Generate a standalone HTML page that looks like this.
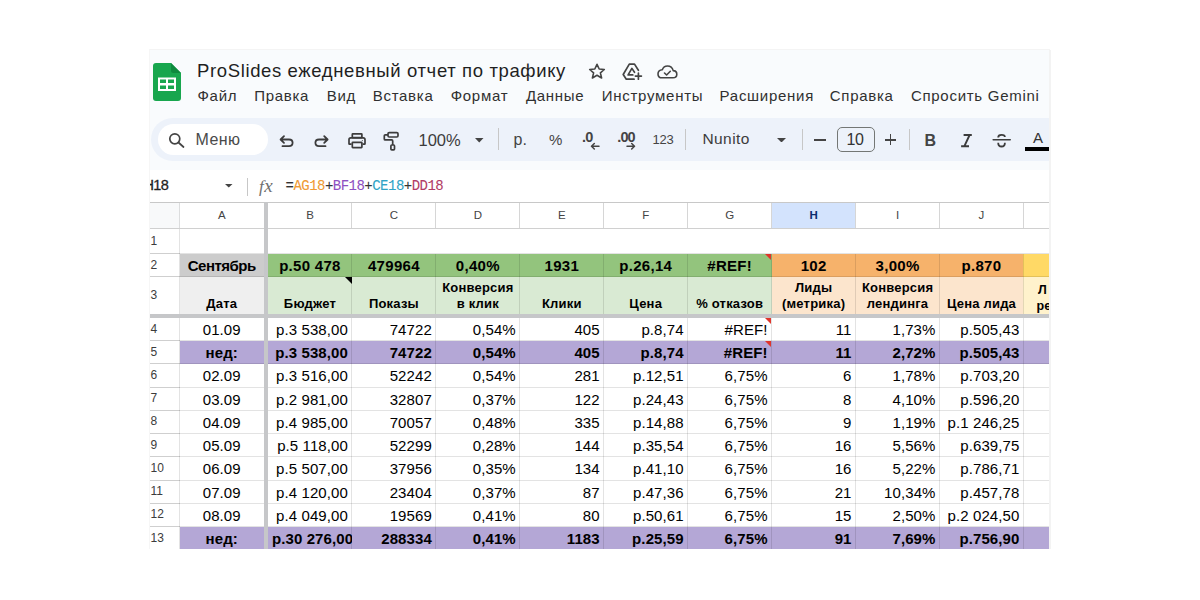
<!DOCTYPE html><html><head><meta charset="utf-8"><style>
*{margin:0;padding:0;box-sizing:border-box}
html,body{width:1200px;height:600px;background:#fff;overflow:hidden;font-family:"Liberation Sans",sans-serif}
#p{position:absolute;left:150px;top:50px;width:899px;height:499px;background:#f9fbfd;overflow:hidden}
#sh{position:absolute;left:1049px;top:50px;width:2px;height:499px;background:#f3f3f3}
#st{position:absolute;left:149px;top:49px;width:901px;height:1px;background:#f4f4f4}
#sl{position:absolute;left:149px;top:49px;width:1px;height:500px;background:#f6f6f6}
.a{position:absolute;white-space:nowrap}
.c{position:absolute;white-space:nowrap;overflow:hidden;color:#000}
.hl{position:absolute;background:#e1e1e1}
</style></head><body>
<div id="sh"></div><div id="st"></div><div id="sl"></div><div id="p">
<div class="a" style="left:0.00px;top:120.00px;width:900.00px;height:379.00px;background:#fff"></div>
<div class="a" style="left:0.00px;top:152.00px;width:900.00px;height:26.50px;background:#fff"></div>
<div class="a" style="left:0.00px;top:152.00px;width:29.50px;height:26.50px;background:#f8f9fa"></div>
<div class="a" style="left:621.50px;top:152.00px;width:84.00px;height:26.50px;background:#d3e3fd"></div>
<div class="a" style="left:29.50px;top:203.50px;width:84.50px;height:23.00px;background:#cccccc"></div>
<div class="a" style="left:29.50px;top:226.50px;width:84.50px;height:37.00px;background:#efefef"></div>
<div class="a" style="left:118.00px;top:203.50px;width:83.94px;height:23.00px;background:#93c47d"></div>
<div class="a" style="left:118.00px;top:226.50px;width:83.94px;height:37.00px;background:#d9ead3"></div>
<div class="a" style="left:201.94px;top:203.50px;width:83.94px;height:23.00px;background:#93c47d"></div>
<div class="a" style="left:201.94px;top:226.50px;width:83.94px;height:37.00px;background:#d9ead3"></div>
<div class="a" style="left:285.88px;top:203.50px;width:83.94px;height:23.00px;background:#93c47d"></div>
<div class="a" style="left:285.88px;top:226.50px;width:83.94px;height:37.00px;background:#d9ead3"></div>
<div class="a" style="left:369.82px;top:203.50px;width:83.94px;height:23.00px;background:#93c47d"></div>
<div class="a" style="left:369.82px;top:226.50px;width:83.94px;height:37.00px;background:#d9ead3"></div>
<div class="a" style="left:453.76px;top:203.50px;width:83.94px;height:23.00px;background:#93c47d"></div>
<div class="a" style="left:453.76px;top:226.50px;width:83.94px;height:37.00px;background:#d9ead3"></div>
<div class="a" style="left:537.70px;top:203.50px;width:83.94px;height:23.00px;background:#93c47d"></div>
<div class="a" style="left:537.70px;top:226.50px;width:83.94px;height:37.00px;background:#d9ead3"></div>
<div class="a" style="left:621.64px;top:203.50px;width:83.94px;height:23.00px;background:#f6b26b"></div>
<div class="a" style="left:621.64px;top:226.50px;width:83.94px;height:37.00px;background:#fce5cd"></div>
<div class="a" style="left:705.58px;top:203.50px;width:83.94px;height:23.00px;background:#f6b26b"></div>
<div class="a" style="left:705.58px;top:226.50px;width:83.94px;height:37.00px;background:#fce5cd"></div>
<div class="a" style="left:789.52px;top:203.50px;width:83.94px;height:23.00px;background:#f6b26b"></div>
<div class="a" style="left:789.52px;top:226.50px;width:83.94px;height:37.00px;background:#fce5cd"></div>
<div class="a" style="left:873.46px;top:203.50px;width:83.94px;height:23.00px;background:#ffd966"></div>
<div class="a" style="left:873.46px;top:226.50px;width:83.94px;height:37.00px;background:#fff2cc"></div>
<div class="a" style="left:29.50px;top:290.50px;width:870.50px;height:23.25px;background:#b4a7d6"></div>
<div class="a" style="left:29.50px;top:476.50px;width:870.50px;height:22.50px;background:#b4a7d6"></div>
<div class="a" style="left:0.00px;top:178.00px;width:900.00px;height:1.00px;background:rgba(0,0,0,0.11)"></div>
<div class="a" style="left:0.00px;top:178.00px;width:29.50px;height:1.00px;background:#cfcfcf"></div>
<div class="a" style="left:0.00px;top:203.00px;width:900.00px;height:1.00px;background:rgba(0,0,0,0.11)"></div>
<div class="a" style="left:0.00px;top:203.00px;width:29.50px;height:1.00px;background:#cfcfcf"></div>
<div class="a" style="left:0.00px;top:226.00px;width:900.00px;height:1.00px;background:rgba(0,0,0,0.11)"></div>
<div class="a" style="left:0.00px;top:226.00px;width:29.50px;height:1.00px;background:#cfcfcf"></div>
<div class="a" style="left:0.00px;top:290.00px;width:900.00px;height:1.00px;background:rgba(0,0,0,0.11)"></div>
<div class="a" style="left:0.00px;top:290.00px;width:29.50px;height:1.00px;background:#cfcfcf"></div>
<div class="a" style="left:0.00px;top:313.25px;width:900.00px;height:1.00px;background:rgba(0,0,0,0.11)"></div>
<div class="a" style="left:0.00px;top:313.25px;width:29.50px;height:1.00px;background:#cfcfcf"></div>
<div class="a" style="left:0.00px;top:336.50px;width:900.00px;height:1.00px;background:rgba(0,0,0,0.11)"></div>
<div class="a" style="left:0.00px;top:336.50px;width:29.50px;height:1.00px;background:#cfcfcf"></div>
<div class="a" style="left:0.00px;top:359.75px;width:900.00px;height:1.00px;background:rgba(0,0,0,0.11)"></div>
<div class="a" style="left:0.00px;top:359.75px;width:29.50px;height:1.00px;background:#cfcfcf"></div>
<div class="a" style="left:0.00px;top:383.00px;width:900.00px;height:1.00px;background:rgba(0,0,0,0.11)"></div>
<div class="a" style="left:0.00px;top:383.00px;width:29.50px;height:1.00px;background:#cfcfcf"></div>
<div class="a" style="left:0.00px;top:406.25px;width:900.00px;height:1.00px;background:rgba(0,0,0,0.11)"></div>
<div class="a" style="left:0.00px;top:406.25px;width:29.50px;height:1.00px;background:#cfcfcf"></div>
<div class="a" style="left:0.00px;top:429.50px;width:900.00px;height:1.00px;background:rgba(0,0,0,0.11)"></div>
<div class="a" style="left:0.00px;top:429.50px;width:29.50px;height:1.00px;background:#cfcfcf"></div>
<div class="a" style="left:0.00px;top:452.75px;width:900.00px;height:1.00px;background:rgba(0,0,0,0.11)"></div>
<div class="a" style="left:0.00px;top:452.75px;width:29.50px;height:1.00px;background:#cfcfcf"></div>
<div class="a" style="left:0.00px;top:476.00px;width:900.00px;height:1.00px;background:rgba(0,0,0,0.11)"></div>
<div class="a" style="left:0.00px;top:476.00px;width:29.50px;height:1.00px;background:#cfcfcf"></div>
<div class="a" style="left:0.00px;top:498.50px;width:900.00px;height:1.00px;background:rgba(0,0,0,0.11)"></div>
<div class="a" style="left:0.00px;top:498.50px;width:29.50px;height:1.00px;background:#cfcfcf"></div>
<div class="a" style="left:29.00px;top:152.00px;width:1.00px;height:347.00px;background:rgba(0,0,0,0.11)"></div>
<div class="a" style="left:201.44px;top:152.00px;width:1.00px;height:26.50px;background:#d6d6d6"></div>
<div class="a" style="left:201.44px;top:203.50px;width:1.00px;height:295.50px;background:rgba(0,0,0,0.11)"></div>
<div class="a" style="left:285.38px;top:152.00px;width:1.00px;height:26.50px;background:#d6d6d6"></div>
<div class="a" style="left:285.38px;top:203.50px;width:1.00px;height:295.50px;background:rgba(0,0,0,0.11)"></div>
<div class="a" style="left:369.32px;top:152.00px;width:1.00px;height:26.50px;background:#d6d6d6"></div>
<div class="a" style="left:369.32px;top:203.50px;width:1.00px;height:295.50px;background:rgba(0,0,0,0.11)"></div>
<div class="a" style="left:453.26px;top:152.00px;width:1.00px;height:26.50px;background:#d6d6d6"></div>
<div class="a" style="left:453.26px;top:203.50px;width:1.00px;height:295.50px;background:rgba(0,0,0,0.11)"></div>
<div class="a" style="left:537.20px;top:152.00px;width:1.00px;height:26.50px;background:#d6d6d6"></div>
<div class="a" style="left:537.20px;top:203.50px;width:1.00px;height:295.50px;background:rgba(0,0,0,0.11)"></div>
<div class="a" style="left:621.14px;top:152.00px;width:1.00px;height:26.50px;background:#d6d6d6"></div>
<div class="a" style="left:621.14px;top:203.50px;width:1.00px;height:295.50px;background:rgba(0,0,0,0.11)"></div>
<div class="a" style="left:705.08px;top:152.00px;width:1.00px;height:26.50px;background:#d6d6d6"></div>
<div class="a" style="left:705.08px;top:203.50px;width:1.00px;height:295.50px;background:rgba(0,0,0,0.11)"></div>
<div class="a" style="left:789.02px;top:152.00px;width:1.00px;height:26.50px;background:#d6d6d6"></div>
<div class="a" style="left:789.02px;top:203.50px;width:1.00px;height:295.50px;background:rgba(0,0,0,0.11)"></div>
<div class="a" style="left:872.96px;top:152.00px;width:1.00px;height:26.50px;background:#d6d6d6"></div>
<div class="a" style="left:872.96px;top:203.50px;width:1.00px;height:295.50px;background:rgba(0,0,0,0.11)"></div>
<div class="a" style="left:0.00px;top:151.50px;width:900.00px;height:1.00px;background:#c8c8c8"></div>
<div class="a" style="left:0.00px;top:178.00px;width:900.00px;height:1.00px;background:#d0d0d0"></div>
<div class="a" style="left:114.00px;top:152.00px;width:4.00px;height:347.00px;background:#c6c7c9"></div>
<div class="a" style="left:0.00px;top:263.50px;width:900.00px;height:4.00px;background:#c6c7c9"></div>
<div class="c" style="left:29.50px;top:152.00px;width:84.50px;height:26.50px;font-size:11.5px;color:#444;text-align:center;line-height:26px">A</div>
<div class="c" style="left:118.00px;top:152.00px;width:83.94px;height:26.50px;font-size:11.5px;color:#444;text-align:center;line-height:26px">B</div>
<div class="c" style="left:201.94px;top:152.00px;width:83.94px;height:26.50px;font-size:11.5px;color:#444;text-align:center;line-height:26px">C</div>
<div class="c" style="left:285.88px;top:152.00px;width:83.94px;height:26.50px;font-size:11.5px;color:#444;text-align:center;line-height:26px">D</div>
<div class="c" style="left:369.82px;top:152.00px;width:83.94px;height:26.50px;font-size:11.5px;color:#444;text-align:center;line-height:26px">E</div>
<div class="c" style="left:453.76px;top:152.00px;width:83.94px;height:26.50px;font-size:11.5px;color:#444;text-align:center;line-height:26px">F</div>
<div class="c" style="left:537.70px;top:152.00px;width:83.94px;height:26.50px;font-size:11.5px;color:#444;text-align:center;line-height:26px">G</div>
<div class="c" style="left:621.64px;top:152.00px;width:83.94px;height:26.50px;font-size:11.5px;color:#0b2e6f;font-weight:bold;text-align:center;line-height:26px">H</div>
<div class="c" style="left:705.58px;top:152.00px;width:83.94px;height:26.50px;font-size:11.5px;color:#444;text-align:center;line-height:26px">I</div>
<div class="c" style="left:789.52px;top:152.00px;width:83.94px;height:26.50px;font-size:11.5px;color:#444;text-align:center;line-height:26px">J</div>
<div class="c" style="left:873.46px;top:152.00px;width:83.94px;height:26.50px;font-size:11.5px;color:#444;text-align:center;line-height:26px">K</div>
<div class="c" style="left:0.00px;top:178.50px;width:29.50px;height:25.00px;font-size:12px;color:#3c3c3c;line-height:25.00px;text-indent:0.5px">1</div>
<div class="c" style="left:0.00px;top:203.50px;width:29.50px;height:23.00px;font-size:12px;color:#3c3c3c;line-height:23.00px;text-indent:0.5px">2</div>
<div class="c" style="left:0.00px;top:226.50px;width:29.50px;height:37.00px;font-size:12px;color:#3c3c3c;line-height:37.00px;text-indent:0.5px">3</div>
<div class="c" style="left:0.00px;top:267.50px;width:29.50px;height:23.00px;font-size:12px;color:#3c3c3c;line-height:23.00px;text-indent:0.5px">4</div>
<div class="c" style="left:0.00px;top:290.50px;width:29.50px;height:23.25px;font-size:12px;color:#3c3c3c;line-height:23.25px;text-indent:0.5px">5</div>
<div class="c" style="left:0.00px;top:313.75px;width:29.50px;height:23.25px;font-size:12px;color:#3c3c3c;line-height:23.25px;text-indent:0.5px">6</div>
<div class="c" style="left:0.00px;top:337.00px;width:29.50px;height:23.25px;font-size:12px;color:#3c3c3c;line-height:23.25px;text-indent:0.5px">7</div>
<div class="c" style="left:0.00px;top:360.25px;width:29.50px;height:23.25px;font-size:12px;color:#3c3c3c;line-height:23.25px;text-indent:0.5px">8</div>
<div class="c" style="left:0.00px;top:383.50px;width:29.50px;height:23.25px;font-size:12px;color:#3c3c3c;line-height:23.25px;text-indent:0.5px">9</div>
<div class="c" style="left:0.00px;top:406.75px;width:29.50px;height:23.25px;font-size:12px;color:#3c3c3c;line-height:23.25px;text-indent:0.5px">10</div>
<div class="c" style="left:0.00px;top:430.00px;width:29.50px;height:23.25px;font-size:12px;color:#3c3c3c;line-height:23.25px;text-indent:0.5px">11</div>
<div class="c" style="left:0.00px;top:453.25px;width:29.50px;height:23.25px;font-size:12px;color:#3c3c3c;line-height:23.25px;text-indent:0.5px">12</div>
<div class="c" style="left:0.00px;top:476.50px;width:29.50px;height:22.50px;font-size:12px;color:#3c3c3c;line-height:22.50px;text-indent:0.5px">13</div>
<div class="c" style="left:29.50px;top:203.50px;width:84.50px;height:23.00px;font-size:15px;font-weight:bold;text-align:center;line-height:23.00px;letter-spacing:-0.5px">Сентябрь</div>
<div class="c" style="left:118.00px;top:203.50px;width:83.94px;height:23.00px;font-size:15px;font-weight:bold;text-align:center;line-height:23.00px;letter-spacing:0.3px">р.50 478</div>
<div class="c" style="left:201.94px;top:203.50px;width:83.94px;height:23.00px;font-size:15px;font-weight:bold;text-align:center;line-height:23.00px;letter-spacing:0.3px">479964</div>
<div class="c" style="left:285.88px;top:203.50px;width:83.94px;height:23.00px;font-size:15px;font-weight:bold;text-align:center;line-height:23.00px;letter-spacing:0.3px">0,40%</div>
<div class="c" style="left:369.82px;top:203.50px;width:83.94px;height:23.00px;font-size:15px;font-weight:bold;text-align:center;line-height:23.00px;letter-spacing:0.3px">1931</div>
<div class="c" style="left:453.76px;top:203.50px;width:83.94px;height:23.00px;font-size:15px;font-weight:bold;text-align:center;line-height:23.00px;letter-spacing:0.3px">р.26,14</div>
<div class="c" style="left:537.70px;top:203.50px;width:83.94px;height:23.00px;font-size:15px;font-weight:bold;text-align:center;line-height:23.00px;letter-spacing:0.3px">#REF!</div>
<div class="c" style="left:621.64px;top:203.50px;width:83.94px;height:23.00px;font-size:15px;font-weight:bold;text-align:center;line-height:23.00px;letter-spacing:0.3px">102</div>
<div class="c" style="left:705.58px;top:203.50px;width:83.94px;height:23.00px;font-size:15px;font-weight:bold;text-align:center;line-height:23.00px;letter-spacing:0.3px">3,00%</div>
<div class="c" style="left:789.52px;top:203.50px;width:83.94px;height:23.00px;font-size:15px;font-weight:bold;text-align:center;line-height:23.00px;letter-spacing:0.3px">р.870</div>
<div class="c" style="left:873.46px;top:203.50px;width:83.94px;height:23.00px;font-size:15px;font-weight:bold;text-align:center;line-height:23.00px;letter-spacing:0.3px"></div>
<div class="c" style="left:29.50px;top:226.50px;width:84.50px;height:37.00px;font-size:13px;font-weight:bold;text-align:center;line-height:16px;display:flex;align-items:flex-end;justify-content:center;padding-bottom:1.2px;letter-spacing:0.2px"><span>Дата</span></div>
<div class="c" style="left:118.00px;top:226.50px;width:83.94px;height:37.00px;font-size:13px;font-weight:bold;text-align:center;line-height:16px;display:flex;align-items:flex-end;justify-content:center;padding-bottom:1.2px;letter-spacing:0.2px"><span>Бюджет</span></div>
<div class="c" style="left:201.94px;top:226.50px;width:83.94px;height:37.00px;font-size:13px;font-weight:bold;text-align:center;line-height:16px;display:flex;align-items:flex-end;justify-content:center;padding-bottom:1.2px;letter-spacing:0.2px"><span>Показы</span></div>
<div class="c" style="left:285.88px;top:226.50px;width:83.94px;height:37.00px;font-size:13px;font-weight:bold;text-align:center;line-height:16px;display:flex;align-items:flex-end;justify-content:center;padding-bottom:1.2px;letter-spacing:0.2px"><span>Конверсия<br>в клик</span></div>
<div class="c" style="left:369.82px;top:226.50px;width:83.94px;height:37.00px;font-size:13px;font-weight:bold;text-align:center;line-height:16px;display:flex;align-items:flex-end;justify-content:center;padding-bottom:1.2px;letter-spacing:0.2px"><span>Клики</span></div>
<div class="c" style="left:453.76px;top:226.50px;width:83.94px;height:37.00px;font-size:13px;font-weight:bold;text-align:center;line-height:16px;display:flex;align-items:flex-end;justify-content:center;padding-bottom:1.2px;letter-spacing:0.2px"><span>Цена</span></div>
<div class="c" style="left:537.70px;top:226.50px;width:83.94px;height:37.00px;font-size:13px;font-weight:bold;text-align:center;line-height:16px;display:flex;align-items:flex-end;justify-content:center;padding-bottom:1.2px;letter-spacing:0.2px"><span>% отказов</span></div>
<div class="c" style="left:621.64px;top:226.50px;width:83.94px;height:37.00px;font-size:13px;font-weight:bold;text-align:center;line-height:16px;display:flex;align-items:flex-end;justify-content:center;padding-bottom:1.2px;letter-spacing:0.2px"><span>Лиды<br>(метрика)</span></div>
<div class="c" style="left:705.58px;top:226.50px;width:83.94px;height:37.00px;font-size:13px;font-weight:bold;text-align:center;line-height:16px;display:flex;align-items:flex-end;justify-content:center;padding-bottom:1.2px;letter-spacing:0.2px"><span>Конверсия<br>лендинга</span></div>
<div class="c" style="left:789.52px;top:226.50px;width:83.94px;height:37.00px;font-size:13px;font-weight:bold;text-align:center;line-height:16px;display:flex;align-items:flex-end;justify-content:center;padding-bottom:1.2px;letter-spacing:0.2px"><span>Цена лида</span></div>
<div class="c" style="left:873.46px;top:226.50px;width:83.94px;height:37.00px;font-size:13px;font-weight:bold;text-align:center;line-height:16px;display:flex;align-items:flex-end;justify-content:center;padding-bottom:1.2px;letter-spacing:0.2px"><span></span></div>
<div class="c" style="left:29.50px;top:267.50px;width:84.50px;height:23.00px;font-size:15px;font-weight:normal;text-align:center;line-height:23.00px;padding:0.57px 4px 0 4px;line-height:23.25px;letter-spacing:0.1px">01.09</div>
<div class="c" style="left:118.00px;top:267.50px;width:83.94px;height:23.00px;font-size:15px;font-weight:normal;text-align:right;line-height:23.00px;padding:0.57px 4px 0 4px;line-height:23.25px;letter-spacing:0.1px">р.3 538,00</div>
<div class="c" style="left:201.94px;top:267.50px;width:83.94px;height:23.00px;font-size:15px;font-weight:normal;text-align:right;line-height:23.00px;padding:0.57px 4px 0 4px;line-height:23.25px;letter-spacing:0.1px">74722</div>
<div class="c" style="left:285.88px;top:267.50px;width:83.94px;height:23.00px;font-size:15px;font-weight:normal;text-align:right;line-height:23.00px;padding:0.57px 4px 0 4px;line-height:23.25px;letter-spacing:0.1px">0,54%</div>
<div class="c" style="left:369.82px;top:267.50px;width:83.94px;height:23.00px;font-size:15px;font-weight:normal;text-align:right;line-height:23.00px;padding:0.57px 4px 0 4px;line-height:23.25px;letter-spacing:0.1px">405</div>
<div class="c" style="left:453.76px;top:267.50px;width:83.94px;height:23.00px;font-size:15px;font-weight:normal;text-align:right;line-height:23.00px;padding:0.57px 4px 0 4px;line-height:23.25px;letter-spacing:0.1px">р.8,74</div>
<div class="c" style="left:537.70px;top:267.50px;width:83.94px;height:23.00px;font-size:15px;font-weight:normal;text-align:right;line-height:23.00px;padding:0.57px 4px 0 4px;line-height:23.25px;letter-spacing:0.1px">#REF!</div>
<div class="c" style="left:621.64px;top:267.50px;width:83.94px;height:23.00px;font-size:15px;font-weight:normal;text-align:right;line-height:23.00px;padding:0.57px 4px 0 4px;line-height:23.25px;letter-spacing:0.1px">11</div>
<div class="c" style="left:705.58px;top:267.50px;width:83.94px;height:23.00px;font-size:15px;font-weight:normal;text-align:right;line-height:23.00px;padding:0.57px 4px 0 4px;line-height:23.25px;letter-spacing:0.1px">1,73%</div>
<div class="c" style="left:789.52px;top:267.50px;width:83.94px;height:23.00px;font-size:15px;font-weight:normal;text-align:right;line-height:23.00px;padding:0.57px 4px 0 4px;line-height:23.25px;letter-spacing:0.1px">р.505,43</div>
<div class="c" style="left:29.50px;top:290.50px;width:84.50px;height:23.25px;font-size:15px;font-weight:bold;text-align:center;line-height:23.25px;padding:0.70px 4px 0 4px;line-height:23.25px;letter-spacing:0.1px">нед:</div>
<div class="c" style="left:118.00px;top:290.50px;width:83.94px;height:23.25px;font-size:15px;font-weight:bold;text-align:right;line-height:23.25px;padding:0.70px 4px 0 4px;line-height:23.25px;letter-spacing:0.1px">р.3 538,00</div>
<div class="c" style="left:201.94px;top:290.50px;width:83.94px;height:23.25px;font-size:15px;font-weight:bold;text-align:right;line-height:23.25px;padding:0.70px 4px 0 4px;line-height:23.25px;letter-spacing:0.1px">74722</div>
<div class="c" style="left:285.88px;top:290.50px;width:83.94px;height:23.25px;font-size:15px;font-weight:bold;text-align:right;line-height:23.25px;padding:0.70px 4px 0 4px;line-height:23.25px;letter-spacing:0.1px">0,54%</div>
<div class="c" style="left:369.82px;top:290.50px;width:83.94px;height:23.25px;font-size:15px;font-weight:bold;text-align:right;line-height:23.25px;padding:0.70px 4px 0 4px;line-height:23.25px;letter-spacing:0.1px">405</div>
<div class="c" style="left:453.76px;top:290.50px;width:83.94px;height:23.25px;font-size:15px;font-weight:bold;text-align:right;line-height:23.25px;padding:0.70px 4px 0 4px;line-height:23.25px;letter-spacing:0.1px">р.8,74</div>
<div class="c" style="left:537.70px;top:290.50px;width:83.94px;height:23.25px;font-size:15px;font-weight:bold;text-align:right;line-height:23.25px;padding:0.70px 4px 0 4px;line-height:23.25px;letter-spacing:0.1px">#REF!</div>
<div class="c" style="left:621.64px;top:290.50px;width:83.94px;height:23.25px;font-size:15px;font-weight:bold;text-align:right;line-height:23.25px;padding:0.70px 4px 0 4px;line-height:23.25px;letter-spacing:0.1px">11</div>
<div class="c" style="left:705.58px;top:290.50px;width:83.94px;height:23.25px;font-size:15px;font-weight:bold;text-align:right;line-height:23.25px;padding:0.70px 4px 0 4px;line-height:23.25px;letter-spacing:0.1px">2,72%</div>
<div class="c" style="left:789.52px;top:290.50px;width:83.94px;height:23.25px;font-size:15px;font-weight:bold;text-align:right;line-height:23.25px;padding:0.70px 4px 0 4px;line-height:23.25px;letter-spacing:0.1px">р.505,43</div>
<div class="c" style="left:29.50px;top:313.75px;width:84.50px;height:23.25px;font-size:15px;font-weight:normal;text-align:center;line-height:23.25px;padding:0.70px 4px 0 4px;line-height:23.25px;letter-spacing:0.1px">02.09</div>
<div class="c" style="left:118.00px;top:313.75px;width:83.94px;height:23.25px;font-size:15px;font-weight:normal;text-align:right;line-height:23.25px;padding:0.70px 4px 0 4px;line-height:23.25px;letter-spacing:0.1px">р.3 516,00</div>
<div class="c" style="left:201.94px;top:313.75px;width:83.94px;height:23.25px;font-size:15px;font-weight:normal;text-align:right;line-height:23.25px;padding:0.70px 4px 0 4px;line-height:23.25px;letter-spacing:0.1px">52242</div>
<div class="c" style="left:285.88px;top:313.75px;width:83.94px;height:23.25px;font-size:15px;font-weight:normal;text-align:right;line-height:23.25px;padding:0.70px 4px 0 4px;line-height:23.25px;letter-spacing:0.1px">0,54%</div>
<div class="c" style="left:369.82px;top:313.75px;width:83.94px;height:23.25px;font-size:15px;font-weight:normal;text-align:right;line-height:23.25px;padding:0.70px 4px 0 4px;line-height:23.25px;letter-spacing:0.1px">281</div>
<div class="c" style="left:453.76px;top:313.75px;width:83.94px;height:23.25px;font-size:15px;font-weight:normal;text-align:right;line-height:23.25px;padding:0.70px 4px 0 4px;line-height:23.25px;letter-spacing:0.1px">р.12,51</div>
<div class="c" style="left:537.70px;top:313.75px;width:83.94px;height:23.25px;font-size:15px;font-weight:normal;text-align:right;line-height:23.25px;padding:0.70px 4px 0 4px;line-height:23.25px;letter-spacing:0.1px">6,75%</div>
<div class="c" style="left:621.64px;top:313.75px;width:83.94px;height:23.25px;font-size:15px;font-weight:normal;text-align:right;line-height:23.25px;padding:0.70px 4px 0 4px;line-height:23.25px;letter-spacing:0.1px">6</div>
<div class="c" style="left:705.58px;top:313.75px;width:83.94px;height:23.25px;font-size:15px;font-weight:normal;text-align:right;line-height:23.25px;padding:0.70px 4px 0 4px;line-height:23.25px;letter-spacing:0.1px">1,78%</div>
<div class="c" style="left:789.52px;top:313.75px;width:83.94px;height:23.25px;font-size:15px;font-weight:normal;text-align:right;line-height:23.25px;padding:0.70px 4px 0 4px;line-height:23.25px;letter-spacing:0.1px">р.703,20</div>
<div class="c" style="left:29.50px;top:337.00px;width:84.50px;height:23.25px;font-size:15px;font-weight:normal;text-align:center;line-height:23.25px;padding:0.70px 4px 0 4px;line-height:23.25px;letter-spacing:0.1px">03.09</div>
<div class="c" style="left:118.00px;top:337.00px;width:83.94px;height:23.25px;font-size:15px;font-weight:normal;text-align:right;line-height:23.25px;padding:0.70px 4px 0 4px;line-height:23.25px;letter-spacing:0.1px">р.2 981,00</div>
<div class="c" style="left:201.94px;top:337.00px;width:83.94px;height:23.25px;font-size:15px;font-weight:normal;text-align:right;line-height:23.25px;padding:0.70px 4px 0 4px;line-height:23.25px;letter-spacing:0.1px">32807</div>
<div class="c" style="left:285.88px;top:337.00px;width:83.94px;height:23.25px;font-size:15px;font-weight:normal;text-align:right;line-height:23.25px;padding:0.70px 4px 0 4px;line-height:23.25px;letter-spacing:0.1px">0,37%</div>
<div class="c" style="left:369.82px;top:337.00px;width:83.94px;height:23.25px;font-size:15px;font-weight:normal;text-align:right;line-height:23.25px;padding:0.70px 4px 0 4px;line-height:23.25px;letter-spacing:0.1px">122</div>
<div class="c" style="left:453.76px;top:337.00px;width:83.94px;height:23.25px;font-size:15px;font-weight:normal;text-align:right;line-height:23.25px;padding:0.70px 4px 0 4px;line-height:23.25px;letter-spacing:0.1px">р.24,43</div>
<div class="c" style="left:537.70px;top:337.00px;width:83.94px;height:23.25px;font-size:15px;font-weight:normal;text-align:right;line-height:23.25px;padding:0.70px 4px 0 4px;line-height:23.25px;letter-spacing:0.1px">6,75%</div>
<div class="c" style="left:621.64px;top:337.00px;width:83.94px;height:23.25px;font-size:15px;font-weight:normal;text-align:right;line-height:23.25px;padding:0.70px 4px 0 4px;line-height:23.25px;letter-spacing:0.1px">8</div>
<div class="c" style="left:705.58px;top:337.00px;width:83.94px;height:23.25px;font-size:15px;font-weight:normal;text-align:right;line-height:23.25px;padding:0.70px 4px 0 4px;line-height:23.25px;letter-spacing:0.1px">4,10%</div>
<div class="c" style="left:789.52px;top:337.00px;width:83.94px;height:23.25px;font-size:15px;font-weight:normal;text-align:right;line-height:23.25px;padding:0.70px 4px 0 4px;line-height:23.25px;letter-spacing:0.1px">р.596,20</div>
<div class="c" style="left:29.50px;top:360.25px;width:84.50px;height:23.25px;font-size:15px;font-weight:normal;text-align:center;line-height:23.25px;padding:0.70px 4px 0 4px;line-height:23.25px;letter-spacing:0.1px">04.09</div>
<div class="c" style="left:118.00px;top:360.25px;width:83.94px;height:23.25px;font-size:15px;font-weight:normal;text-align:right;line-height:23.25px;padding:0.70px 4px 0 4px;line-height:23.25px;letter-spacing:0.1px">р.4 985,00</div>
<div class="c" style="left:201.94px;top:360.25px;width:83.94px;height:23.25px;font-size:15px;font-weight:normal;text-align:right;line-height:23.25px;padding:0.70px 4px 0 4px;line-height:23.25px;letter-spacing:0.1px">70057</div>
<div class="c" style="left:285.88px;top:360.25px;width:83.94px;height:23.25px;font-size:15px;font-weight:normal;text-align:right;line-height:23.25px;padding:0.70px 4px 0 4px;line-height:23.25px;letter-spacing:0.1px">0,48%</div>
<div class="c" style="left:369.82px;top:360.25px;width:83.94px;height:23.25px;font-size:15px;font-weight:normal;text-align:right;line-height:23.25px;padding:0.70px 4px 0 4px;line-height:23.25px;letter-spacing:0.1px">335</div>
<div class="c" style="left:453.76px;top:360.25px;width:83.94px;height:23.25px;font-size:15px;font-weight:normal;text-align:right;line-height:23.25px;padding:0.70px 4px 0 4px;line-height:23.25px;letter-spacing:0.1px">р.14,88</div>
<div class="c" style="left:537.70px;top:360.25px;width:83.94px;height:23.25px;font-size:15px;font-weight:normal;text-align:right;line-height:23.25px;padding:0.70px 4px 0 4px;line-height:23.25px;letter-spacing:0.1px">6,75%</div>
<div class="c" style="left:621.64px;top:360.25px;width:83.94px;height:23.25px;font-size:15px;font-weight:normal;text-align:right;line-height:23.25px;padding:0.70px 4px 0 4px;line-height:23.25px;letter-spacing:0.1px">9</div>
<div class="c" style="left:705.58px;top:360.25px;width:83.94px;height:23.25px;font-size:15px;font-weight:normal;text-align:right;line-height:23.25px;padding:0.70px 4px 0 4px;line-height:23.25px;letter-spacing:0.1px">1,19%</div>
<div class="c" style="left:789.52px;top:360.25px;width:83.94px;height:23.25px;font-size:15px;font-weight:normal;text-align:right;line-height:23.25px;padding:0.70px 4px 0 4px;line-height:23.25px;letter-spacing:0.1px">р.1 246,25</div>
<div class="c" style="left:29.50px;top:383.50px;width:84.50px;height:23.25px;font-size:15px;font-weight:normal;text-align:center;line-height:23.25px;padding:0.70px 4px 0 4px;line-height:23.25px;letter-spacing:0.1px">05.09</div>
<div class="c" style="left:118.00px;top:383.50px;width:83.94px;height:23.25px;font-size:15px;font-weight:normal;text-align:right;line-height:23.25px;padding:0.70px 4px 0 4px;line-height:23.25px;letter-spacing:0.1px">р.5 118,00</div>
<div class="c" style="left:201.94px;top:383.50px;width:83.94px;height:23.25px;font-size:15px;font-weight:normal;text-align:right;line-height:23.25px;padding:0.70px 4px 0 4px;line-height:23.25px;letter-spacing:0.1px">52299</div>
<div class="c" style="left:285.88px;top:383.50px;width:83.94px;height:23.25px;font-size:15px;font-weight:normal;text-align:right;line-height:23.25px;padding:0.70px 4px 0 4px;line-height:23.25px;letter-spacing:0.1px">0,28%</div>
<div class="c" style="left:369.82px;top:383.50px;width:83.94px;height:23.25px;font-size:15px;font-weight:normal;text-align:right;line-height:23.25px;padding:0.70px 4px 0 4px;line-height:23.25px;letter-spacing:0.1px">144</div>
<div class="c" style="left:453.76px;top:383.50px;width:83.94px;height:23.25px;font-size:15px;font-weight:normal;text-align:right;line-height:23.25px;padding:0.70px 4px 0 4px;line-height:23.25px;letter-spacing:0.1px">р.35,54</div>
<div class="c" style="left:537.70px;top:383.50px;width:83.94px;height:23.25px;font-size:15px;font-weight:normal;text-align:right;line-height:23.25px;padding:0.70px 4px 0 4px;line-height:23.25px;letter-spacing:0.1px">6,75%</div>
<div class="c" style="left:621.64px;top:383.50px;width:83.94px;height:23.25px;font-size:15px;font-weight:normal;text-align:right;line-height:23.25px;padding:0.70px 4px 0 4px;line-height:23.25px;letter-spacing:0.1px">16</div>
<div class="c" style="left:705.58px;top:383.50px;width:83.94px;height:23.25px;font-size:15px;font-weight:normal;text-align:right;line-height:23.25px;padding:0.70px 4px 0 4px;line-height:23.25px;letter-spacing:0.1px">5,56%</div>
<div class="c" style="left:789.52px;top:383.50px;width:83.94px;height:23.25px;font-size:15px;font-weight:normal;text-align:right;line-height:23.25px;padding:0.70px 4px 0 4px;line-height:23.25px;letter-spacing:0.1px">р.639,75</div>
<div class="c" style="left:29.50px;top:406.75px;width:84.50px;height:23.25px;font-size:15px;font-weight:normal;text-align:center;line-height:23.25px;padding:0.70px 4px 0 4px;line-height:23.25px;letter-spacing:0.1px">06.09</div>
<div class="c" style="left:118.00px;top:406.75px;width:83.94px;height:23.25px;font-size:15px;font-weight:normal;text-align:right;line-height:23.25px;padding:0.70px 4px 0 4px;line-height:23.25px;letter-spacing:0.1px">р.5 507,00</div>
<div class="c" style="left:201.94px;top:406.75px;width:83.94px;height:23.25px;font-size:15px;font-weight:normal;text-align:right;line-height:23.25px;padding:0.70px 4px 0 4px;line-height:23.25px;letter-spacing:0.1px">37956</div>
<div class="c" style="left:285.88px;top:406.75px;width:83.94px;height:23.25px;font-size:15px;font-weight:normal;text-align:right;line-height:23.25px;padding:0.70px 4px 0 4px;line-height:23.25px;letter-spacing:0.1px">0,35%</div>
<div class="c" style="left:369.82px;top:406.75px;width:83.94px;height:23.25px;font-size:15px;font-weight:normal;text-align:right;line-height:23.25px;padding:0.70px 4px 0 4px;line-height:23.25px;letter-spacing:0.1px">134</div>
<div class="c" style="left:453.76px;top:406.75px;width:83.94px;height:23.25px;font-size:15px;font-weight:normal;text-align:right;line-height:23.25px;padding:0.70px 4px 0 4px;line-height:23.25px;letter-spacing:0.1px">р.41,10</div>
<div class="c" style="left:537.70px;top:406.75px;width:83.94px;height:23.25px;font-size:15px;font-weight:normal;text-align:right;line-height:23.25px;padding:0.70px 4px 0 4px;line-height:23.25px;letter-spacing:0.1px">6,75%</div>
<div class="c" style="left:621.64px;top:406.75px;width:83.94px;height:23.25px;font-size:15px;font-weight:normal;text-align:right;line-height:23.25px;padding:0.70px 4px 0 4px;line-height:23.25px;letter-spacing:0.1px">16</div>
<div class="c" style="left:705.58px;top:406.75px;width:83.94px;height:23.25px;font-size:15px;font-weight:normal;text-align:right;line-height:23.25px;padding:0.70px 4px 0 4px;line-height:23.25px;letter-spacing:0.1px">5,22%</div>
<div class="c" style="left:789.52px;top:406.75px;width:83.94px;height:23.25px;font-size:15px;font-weight:normal;text-align:right;line-height:23.25px;padding:0.70px 4px 0 4px;line-height:23.25px;letter-spacing:0.1px">р.786,71</div>
<div class="c" style="left:29.50px;top:430.00px;width:84.50px;height:23.25px;font-size:15px;font-weight:normal;text-align:center;line-height:23.25px;padding:0.70px 4px 0 4px;line-height:23.25px;letter-spacing:0.1px">07.09</div>
<div class="c" style="left:118.00px;top:430.00px;width:83.94px;height:23.25px;font-size:15px;font-weight:normal;text-align:right;line-height:23.25px;padding:0.70px 4px 0 4px;line-height:23.25px;letter-spacing:0.1px">р.4 120,00</div>
<div class="c" style="left:201.94px;top:430.00px;width:83.94px;height:23.25px;font-size:15px;font-weight:normal;text-align:right;line-height:23.25px;padding:0.70px 4px 0 4px;line-height:23.25px;letter-spacing:0.1px">23404</div>
<div class="c" style="left:285.88px;top:430.00px;width:83.94px;height:23.25px;font-size:15px;font-weight:normal;text-align:right;line-height:23.25px;padding:0.70px 4px 0 4px;line-height:23.25px;letter-spacing:0.1px">0,37%</div>
<div class="c" style="left:369.82px;top:430.00px;width:83.94px;height:23.25px;font-size:15px;font-weight:normal;text-align:right;line-height:23.25px;padding:0.70px 4px 0 4px;line-height:23.25px;letter-spacing:0.1px">87</div>
<div class="c" style="left:453.76px;top:430.00px;width:83.94px;height:23.25px;font-size:15px;font-weight:normal;text-align:right;line-height:23.25px;padding:0.70px 4px 0 4px;line-height:23.25px;letter-spacing:0.1px">р.47,36</div>
<div class="c" style="left:537.70px;top:430.00px;width:83.94px;height:23.25px;font-size:15px;font-weight:normal;text-align:right;line-height:23.25px;padding:0.70px 4px 0 4px;line-height:23.25px;letter-spacing:0.1px">6,75%</div>
<div class="c" style="left:621.64px;top:430.00px;width:83.94px;height:23.25px;font-size:15px;font-weight:normal;text-align:right;line-height:23.25px;padding:0.70px 4px 0 4px;line-height:23.25px;letter-spacing:0.1px">21</div>
<div class="c" style="left:705.58px;top:430.00px;width:83.94px;height:23.25px;font-size:15px;font-weight:normal;text-align:right;line-height:23.25px;padding:0.70px 4px 0 4px;line-height:23.25px;letter-spacing:0.1px">10,34%</div>
<div class="c" style="left:789.52px;top:430.00px;width:83.94px;height:23.25px;font-size:15px;font-weight:normal;text-align:right;line-height:23.25px;padding:0.70px 4px 0 4px;line-height:23.25px;letter-spacing:0.1px">р.457,78</div>
<div class="c" style="left:29.50px;top:453.25px;width:84.50px;height:23.25px;font-size:15px;font-weight:normal;text-align:center;line-height:23.25px;padding:0.70px 4px 0 4px;line-height:23.25px;letter-spacing:0.1px">08.09</div>
<div class="c" style="left:118.00px;top:453.25px;width:83.94px;height:23.25px;font-size:15px;font-weight:normal;text-align:right;line-height:23.25px;padding:0.70px 4px 0 4px;line-height:23.25px;letter-spacing:0.1px">р.4 049,00</div>
<div class="c" style="left:201.94px;top:453.25px;width:83.94px;height:23.25px;font-size:15px;font-weight:normal;text-align:right;line-height:23.25px;padding:0.70px 4px 0 4px;line-height:23.25px;letter-spacing:0.1px">19569</div>
<div class="c" style="left:285.88px;top:453.25px;width:83.94px;height:23.25px;font-size:15px;font-weight:normal;text-align:right;line-height:23.25px;padding:0.70px 4px 0 4px;line-height:23.25px;letter-spacing:0.1px">0,41%</div>
<div class="c" style="left:369.82px;top:453.25px;width:83.94px;height:23.25px;font-size:15px;font-weight:normal;text-align:right;line-height:23.25px;padding:0.70px 4px 0 4px;line-height:23.25px;letter-spacing:0.1px">80</div>
<div class="c" style="left:453.76px;top:453.25px;width:83.94px;height:23.25px;font-size:15px;font-weight:normal;text-align:right;line-height:23.25px;padding:0.70px 4px 0 4px;line-height:23.25px;letter-spacing:0.1px">р.50,61</div>
<div class="c" style="left:537.70px;top:453.25px;width:83.94px;height:23.25px;font-size:15px;font-weight:normal;text-align:right;line-height:23.25px;padding:0.70px 4px 0 4px;line-height:23.25px;letter-spacing:0.1px">6,75%</div>
<div class="c" style="left:621.64px;top:453.25px;width:83.94px;height:23.25px;font-size:15px;font-weight:normal;text-align:right;line-height:23.25px;padding:0.70px 4px 0 4px;line-height:23.25px;letter-spacing:0.1px">15</div>
<div class="c" style="left:705.58px;top:453.25px;width:83.94px;height:23.25px;font-size:15px;font-weight:normal;text-align:right;line-height:23.25px;padding:0.70px 4px 0 4px;line-height:23.25px;letter-spacing:0.1px">2,50%</div>
<div class="c" style="left:789.52px;top:453.25px;width:83.94px;height:23.25px;font-size:15px;font-weight:normal;text-align:right;line-height:23.25px;padding:0.70px 4px 0 4px;line-height:23.25px;letter-spacing:0.1px">р.2 024,50</div>
<div class="c" style="left:29.50px;top:476.50px;width:84.50px;height:22.50px;font-size:15px;font-weight:bold;text-align:center;line-height:22.50px;padding:0.32px 4px 0 4px;line-height:23.25px;letter-spacing:0.1px">нед:</div>
<div class="c" style="left:118.00px;top:476.50px;width:83.94px;height:22.50px;font-size:15px;font-weight:bold;text-align:right;line-height:22.50px;padding:0.32px 4px 0 4px;line-height:23.25px;letter-spacing:0.1px">р.30 276,00</div>
<div class="c" style="left:201.94px;top:476.50px;width:83.94px;height:22.50px;font-size:15px;font-weight:bold;text-align:right;line-height:22.50px;padding:0.32px 4px 0 4px;line-height:23.25px;letter-spacing:0.1px">288334</div>
<div class="c" style="left:285.88px;top:476.50px;width:83.94px;height:22.50px;font-size:15px;font-weight:bold;text-align:right;line-height:22.50px;padding:0.32px 4px 0 4px;line-height:23.25px;letter-spacing:0.1px">0,41%</div>
<div class="c" style="left:369.82px;top:476.50px;width:83.94px;height:22.50px;font-size:15px;font-weight:bold;text-align:right;line-height:22.50px;padding:0.32px 4px 0 4px;line-height:23.25px;letter-spacing:0.1px">1183</div>
<div class="c" style="left:453.76px;top:476.50px;width:83.94px;height:22.50px;font-size:15px;font-weight:bold;text-align:right;line-height:22.50px;padding:0.32px 4px 0 4px;line-height:23.25px;letter-spacing:0.1px">р.25,59</div>
<div class="c" style="left:537.70px;top:476.50px;width:83.94px;height:22.50px;font-size:15px;font-weight:bold;text-align:right;line-height:22.50px;padding:0.32px 4px 0 4px;line-height:23.25px;letter-spacing:0.1px">6,75%</div>
<div class="c" style="left:621.64px;top:476.50px;width:83.94px;height:22.50px;font-size:15px;font-weight:bold;text-align:right;line-height:22.50px;padding:0.32px 4px 0 4px;line-height:23.25px;letter-spacing:0.1px">91</div>
<div class="c" style="left:705.58px;top:476.50px;width:83.94px;height:22.50px;font-size:15px;font-weight:bold;text-align:right;line-height:22.50px;padding:0.32px 4px 0 4px;line-height:23.25px;letter-spacing:0.1px">7,69%</div>
<div class="c" style="left:789.52px;top:476.50px;width:83.94px;height:22.50px;font-size:15px;font-weight:bold;text-align:right;line-height:22.50px;padding:0.32px 4px 0 4px;line-height:23.25px;letter-spacing:0.1px">р.756,90</div>
<svg class="a" style="left:3px;top:13px" width="28" height="38" viewBox="0 0 28 38">
<path d="M3 0 H18 L28 10 V35 Q28 38 25 38 H3 Q0 38 0 35 V3 Q0 0 3 0 Z" fill="#18a64e"/>
<path d="M18 0 L28 10 H20.5 Q18 10 18 7.5 Z" fill="#0e8a3e"/>
<rect x="5" y="14.5" width="18" height="13.5" fill="#fff"/>
<rect x="7" y="16.5" width="6" height="3.5" fill="#18a64e"/>
<rect x="15" y="16.5" width="6" height="3.5" fill="#18a64e"/>
<rect x="7" y="22.5" width="6" height="3.5" fill="#18a64e"/>
<rect x="15" y="22.5" width="6" height="3.5" fill="#18a64e"/>
</svg>
<div class="a" style="left:47.00px;top:10.29px;font-size:18.5px;line-height:22.2px;letter-spacing:0.63px;color:#1f1f1f">ProSlides ежедневный отчет по трафику</div>
<svg class="a" style="left:438px;top:13px" width="18" height="17" viewBox="0 0 18 17" fill="none" stroke="#444" stroke-width="1.6" stroke-linejoin="round">
<path d="M9 1.3 L11.2 6 L16.3 6.5 L12.4 9.9 L13.6 15 L9 12.3 L4.4 15 L5.6 9.9 L1.7 6.5 L6.8 6 Z"/></svg>
<svg class="a" style="left:470px;top:11px" width="24" height="21" viewBox="620 61 24 21" fill="none" stroke="#444" stroke-width="1.7" stroke-linejoin="round" stroke-linecap="round">
<path d="M638.4 70.3 L634.5 64.1 H629.3 L623.2 74.5 L626.3 79.2 H634.1"/><path d="M634.5 72.3 L631.9 68.4 L628.1 74.9 H632.8"/>
<path d="M638.4 73.2 V79.2 M635.4 76.1 H641.4"/></svg>
<svg class="a" style="left:507px;top:15px" width="21" height="14" viewBox="0 0 21 14" fill="none" stroke="#444" stroke-width="1.6" stroke-linejoin="round" stroke-linecap="round">
<path d="M5 12.8 H16 Q19.8 12.8 19.8 9.2 Q19.8 5.8 16.2 5.6 Q15 1 10.5 1 Q6.6 1 5.3 4.8 Q1 5.3 1 8.9 Q1 12.8 5 12.8 Z"/>
<path d="M7.5 8 L9.6 10 L13.3 6.3"/></svg>
<div class="a" style="left:47.50px;top:37.10px;font-size:15px;line-height:18.0px;letter-spacing:0.72px;color:#303030">Файл</div>
<div class="a" style="left:104.20px;top:37.10px;font-size:15px;line-height:18.0px;letter-spacing:0.72px;color:#303030">Правка</div>
<div class="a" style="left:176.70px;top:37.10px;font-size:15px;line-height:18.0px;letter-spacing:0.72px;color:#303030">Вид</div>
<div class="a" style="left:222.70px;top:37.10px;font-size:15px;line-height:18.0px;letter-spacing:0.72px;color:#303030">Вставка</div>
<div class="a" style="left:300.70px;top:37.10px;font-size:15px;line-height:18.0px;letter-spacing:0.72px;color:#303030">Формат</div>
<div class="a" style="left:375.90px;top:37.10px;font-size:15px;line-height:18.0px;letter-spacing:0.72px;color:#303030">Данные</div>
<div class="a" style="left:451.80px;top:37.10px;font-size:15px;line-height:18.0px;letter-spacing:0.72px;color:#303030">Инструменты</div>
<div class="a" style="left:569.60px;top:37.10px;font-size:15px;line-height:18.0px;letter-spacing:0.72px;color:#303030">Расширения</div>
<div class="a" style="left:679.80px;top:37.10px;font-size:15px;line-height:18.0px;letter-spacing:0.72px;color:#303030">Справка</div>
<div class="a" style="left:760.90px;top:37.10px;font-size:15px;line-height:18.0px;letter-spacing:0.72px;color:#303030">Спросить Gemini</div>
<div class="a" style="left:1px;top:68px;width:940px;height:43px;background:#edf2fa;border-radius:22px"></div>
<div class="a" style="left:7.5px;top:73.7px;width:110px;height:31.3px;background:#fff;border-radius:16px"></div>
<svg class="a" style="left:18px;top:82px" width="17" height="17" viewBox="0 0 17 17" fill="none" stroke="#444" stroke-width="1.7" stroke-linecap="round">
<circle cx="6.8" cy="6.8" r="5"/><path d="M10.5 10.5 L15.5 15"/></svg>
<div class="a" style="left:45.50px;top:79.86px;font-size:16px;line-height:19.2px;letter-spacing:0.4px;color:#4a4a4a">Меню</div>
<svg class="a" style="left:128px;top:84px" width="18" height="15" viewBox="278 134 18 15" fill="none" stroke="#3c3c3c" stroke-width="1.8" stroke-linecap="round" stroke-linejoin="round">
<path d="M284 136.2 L280.6 139.5 L284 142.8 M281 139.5 H289 Q292.6 139.5 292.6 142.85 Q292.6 146.2 289 146.2 H282.5"/></svg>
<svg class="a" style="left:163px;top:84px" width="18" height="15" viewBox="313 134 18 15" fill="none" stroke="#3c3c3c" stroke-width="1.8" stroke-linecap="round" stroke-linejoin="round">
<path d="M324.2 136.2 L327.6 139.5 L324.2 142.8 M327.2 139.5 H319 Q315.4 139.5 315.4 142.85 Q315.4 146.2 319 146.2 H325.5"/></svg>
<svg class="a" style="left:196px;top:81px" width="22" height="20" viewBox="346 131 22 20" fill="none" stroke="#3c3c3c" stroke-width="1.7" stroke-linejoin="round">
<rect x="352.3" y="133.9" width="9.6" height="3.8" rx="0.5"/><path d="M351.6 144.2 H349.5 Q349 144.2 349 143.7 V139.6 Q349 137.8 350.8 137.8 H363.2 Q365 137.8 365 139.6 V143.7 Q365 144.2 364.5 144.2 H362.6"/>
<rect x="352.3" y="142.4" width="9.6" height="5.2" rx="0.5"/><circle cx="362.3" cy="140.4" r="0.5" fill="#3c3c3c" stroke="none"/></svg>
<svg class="a" style="left:232px;top:81px" width="18" height="21" viewBox="382 131 18 21" fill="none" stroke="#3c3c3c" stroke-width="1.7" stroke-linejoin="round">
<rect x="388" y="132.6" width="10" height="4.4" rx="1.2"/><path d="M388 134.8 H385.3 Q384.3 134.8 384.3 135.8 V138.9 Q384.3 139.9 385.3 139.9 H391.7 Q392.7 139.9 392.7 140.9 V144.9"/>
<rect x="390.9" y="145" width="3.6" height="4.8" rx="0.9"/></svg>
<div class="a" style="left:268.50px;top:80.68px;font-size:16.5px;line-height:19.8px;letter-spacing:0px;color:#3c3c3c">100%</div>
<svg class="a" style="left:325.00px;top:88.30px" width="8.5" height="4.5" viewBox="0 0 8.5 4.5"><path d="M0 0 H8.5 L4.25 4.5 Z" fill="#444"/></svg>
<div class="a" style="left:348.20px;top:78.00px;width:1px;height:22.00px;background:#c7c7c7"></div>
<div class="a" style="left:363.60px;top:79.86px;font-size:16px;line-height:19.2px;color:#444">р.</div>
<div class="a" style="left:399.00px;top:80.80px;font-size:15px;line-height:18.0px;color:#444">%</div>
<div class="a" style="left:432.00px;top:78.78px;font-size:14.5px;line-height:17.4px;color:#444;font-weight:bold;letter-spacing:-0.9px">.0</div>
<div class="a" style="left:467.30px;top:78.78px;font-size:14.5px;line-height:17.4px;color:#444;font-weight:bold;letter-spacing:-0.9px">.00</div>
<svg class="a" style="left:440px;top:92px" width="10" height="8" viewBox="0 0 10 8" fill="none" stroke="#444" stroke-width="1.5" stroke-linecap="round" stroke-linejoin="round"><path d="M9 4.3 H1.8 M4.3 1.5 L1.5 4.3 L4.3 7"/></svg>
<svg class="a" style="left:475.5px;top:92px" width="10" height="8" viewBox="0 0 10 8" fill="none" stroke="#444" stroke-width="1.5" stroke-linecap="round" stroke-linejoin="round"><path d="M1 4.3 H8.2 M5.7 1.5 L8.5 4.3 L5.7 7"/></svg>
<div class="a" style="left:502.50px;top:81.90px;font-size:13px;line-height:15.6px;color:#444;letter-spacing:-0.2px">123</div>
<div class="a" style="left:534.80px;top:79.00px;width:1px;height:21.00px;background:#c7c7c7"></div>
<div class="a" style="left:552.50px;top:80.03px;font-size:15.5px;line-height:18.6px;letter-spacing:0.4px;color:#3c3c3c">Nunito</div>
<svg class="a" style="left:626.70px;top:87.50px" width="9" height="4.5" viewBox="0 0 9 4.5"><path d="M0 0 H9 L4.5 4.5 Z" fill="#444"/></svg>
<div class="a" style="left:652.00px;top:79.00px;width:1px;height:21.00px;background:#c7c7c7"></div>
<div class="a" style="left:664px;top:89.2px;width:12px;height:1.7px;background:#444"></div>
<div class="a" style="left:686.7px;top:76.6px;width:38.3px;height:25.7px;border:1.3px solid #747775;border-radius:5px"></div>
<div class="a" style="left:696.50px;top:79.86px;font-size:16px;line-height:19.2px;color:#333;letter-spacing:-0.3px">10</div>
<div class="a" style="left:735px;top:89.2px;width:11.3px;height:1.7px;background:#444"></div>
<div class="a" style="left:739.8px;top:84px;width:1.7px;height:11.3px;background:#444"></div>
<div class="a" style="left:759.00px;top:79.00px;width:1px;height:21.00px;background:#c7c7c7"></div>
<div class="a" style="left:774.50px;top:80.66px;font-size:16px;line-height:19.2px;font-weight:bold;color:#444">B</div>
<svg class="a" style="left:809px;top:82px" width="15" height="17" viewBox="959 132 15 17" fill="none" stroke="#3c3c3c" stroke-width="1.9" stroke-linecap="butt">
<path d="M963.6 135 H971.8 M961.1 146.3 H969 M969.6 135 L964.3 146.3"/></svg>
<svg class="a" style="left:841px;top:82px" width="22" height="17" viewBox="991 132 22 17" fill="none" stroke="#3c3c3c" stroke-width="1.8" stroke-linecap="round">
<path d="M993.2 139.8 H1010.2" stroke-width="1.6"/><path d="M998.2 137.4 Q998.2 134.9 1001.6 134.9 Q1004.9 134.9 1004.9 137" stroke-linecap="butt"/><path d="M998.2 142.7 Q998.2 146.5 1001.6 146.5 Q1004.9 146.5 1004.9 142.7" stroke-linecap="butt"/></svg>
<div class="a" style="left:883.00px;top:79.00px;font-size:15px;line-height:18.0px;color:#333">A</div>
<div class="a" style="left:875px;top:96.6px;width:24px;height:4px;background:#000"></div>
<div class="a" style="left:-6.50px;top:127.48px;font-size:14.5px;line-height:17.4px;color:#1f1f1f;letter-spacing:-0.6px;-webkit-text-stroke:0.3px #1f1f1f">Н18</div>
<svg class="a" style="left:75.00px;top:134.00px" width="7.5" height="3.5" viewBox="0 0 7.5 3.5"><path d="M0 0 H7.5 L3.75 3.5 Z" fill="#444"/></svg>
<div class="a" style="left:96.50px;top:127.50px;width:1px;height:18.50px;background:#c7c7c7"></div>
<div class="a" style="left:109.00px;top:126.41px;font-size:17px;line-height:20.4px;font-family:Liberation Serif,serif;font-style:italic;color:#6f6f6f">f<span style="font-size:19px;margin-left:0.5px">x</span></div>
<div class="a" style="left:135.50px;top:128.15px;font-size:14px;line-height:16.8px;font-family:Liberation Mono,monospace;color:#333;letter-spacing:-0.52px;-webkit-text-stroke:0.08px currentColor">=<span style="color:#f09a34">AG18</span>+<span style="color:#8e4fc2">BF18</span>+<span style="color:#2fa3c6">CE18</span>+<span style="color:#b23c66">DD18</span></div>
<svg class="a" style="left:194.50px;top:227.00px" width="7" height="7" viewBox="0 0 7 7"><path d="M0 0 H7 V7 Z" fill="#000"/></svg>
<div class="a" style="left:888px;top:232px;font-size:12.5px;font-weight:bold;line-height:16px;color:#000">Л</div>
<div class="a" style="left:886.5px;top:248px;font-size:12.5px;font-weight:bold;line-height:16px;color:#000">ре</div>
<svg class="a" style="left:614.50px;top:204.00px" width="6.5" height="6.5" viewBox="0 0 6.5 6.5"><path d="M0 0 H6.5 V6.5 Z" fill="#e0352b"/></svg>
<svg class="a" style="left:614.50px;top:267.50px" width="6.5" height="6.5" viewBox="0 0 6.5 6.5"><path d="M0 0 H6.5 V6.5 Z" fill="#e0352b"/></svg>
<svg class="a" style="left:614.50px;top:290.50px" width="6.5" height="6.5" viewBox="0 0 6.5 6.5"><path d="M0 0 H6.5 V6.5 Z" fill="#e0352b"/></svg>
</div></body></html>
